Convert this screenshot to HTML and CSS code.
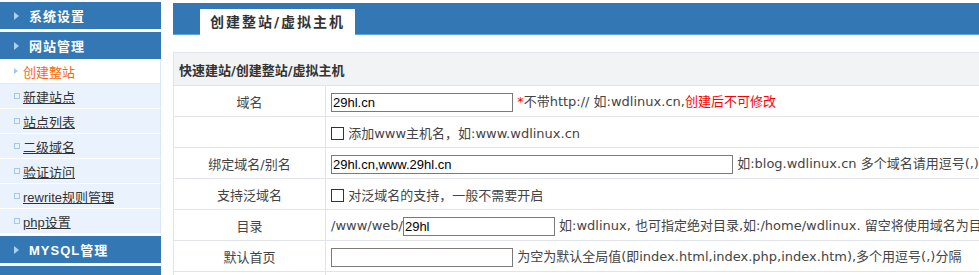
FILE: index.html
```html
<!DOCTYPE html>
<html lang="zh-CN">
<head>
<meta charset="utf-8">
<title>创建整站/虚拟主机</title>
<link rel="stylesheet" href="styles.css">
</head>
<body>
<div class="page">
  <aside class="side">
    <div class="head">系统设置</div>
    <div class="head open">网站管理</div>
    <ul class="items">
      <li class="active"><a href="#">创建整站</a></li>
      <li><a href="#">新建站点</a></li>
      <li><a href="#">站点列表</a></li>
      <li><a href="#">二级域名</a></li>
      <li><a href="#">验证访问</a></li>
      <li><a href="#">rewrite规则管理</a></li>
      <li><a href="#">php设置</a></li>
    </ul>
    <div class="head">MYSQL管理</div>
    <div class="head empty"></div>
  </aside>
  <main class="main">
    <div class="tabbar"><div class="tab">创建整站/虚拟主机</div></div>
    <table class="form">
      <colgroup><col class="c1"><col></colgroup>
      <tr><th class="title" colspan="2">快速建站/创建整站/虚拟主机</th></tr>
      <tr>
        <td class="label">域名</td>
        <td class="val"><input class="txt w182" type="text" value="29hl.cn"> <span class="red">*</span>不带http:// 如:wdlinux.cn,<span class="red">创建后不可修改</span></td>
      </tr>
      <tr>
        <td class="label"></td>
        <td class="val"><input class="chk" type="checkbox"> 添加www主机名，如:www.wdlinux.cn</td>
      </tr>
      <tr>
        <td class="label">绑定域名/别名</td>
        <td class="val"><input class="txt w402" type="text" value="29hl.cn,www.29hl.cn"> 如:blog.wdlinux.cn 多个域名请用逗号(,)分隔</td>
      </tr>
      <tr>
        <td class="label">支持泛域名</td>
        <td class="val"><input class="chk" type="checkbox"> 对泛域名的支持，一般不需要开启</td>
      </tr>
      <tr>
        <td class="label">目录</td>
        <td class="val">/www/web/<input class="txt w152" type="text" value="29hl"> 如:wdlinux, 也可指定绝对目录,如:/home/wdlinux. 留空将使用域名为目录</td>
      </tr>
      <tr>
        <td class="label">默认首页</td>
        <td class="val"><input class="txt w182" type="text" value=""> 为空为默认全局值(即index.html,index.php,index.htm),多个用逗号(,)分隔</td>
      </tr>
      <tr>
        <td class="label"></td>
        <td class="val"></td>
      </tr>
    </table>
  </main>
</div>
</body>
</html>
```
FILE: styles.css
```css
html, body {
  margin: 0;
  padding: 0;
  background: #fff;
  overflow: hidden;
}
body {
  font: 13px "DejaVu Sans", "Noto Sans CJK SC", sans-serif;
  color: #444;
}
.page {
  display: flex;
  gap: 12px;
}

/* sidebar */
.side {
  width: 161px;
  flex: none;
  padding-top: 2px;
  font-family: "Liberation Sans", "Noto Sans CJK SC", sans-serif;
}
.head {
  height: 27px;
  background: #3378b4;
  color: #fff;
  font-weight: bold;
  font-size: 13px;
  letter-spacing: 1px;
  display: flex;
  align-items: center;
  padding-left: 14px;
  margin-bottom: 3px;
}
.head::before {
  content: "";
  border-left: 5px solid #a8d0f3;
  border-top: 4px solid transparent;
  border-bottom: 4px solid transparent;
  margin-right: 10px;
}
.head.open { margin-bottom: 0; }
.head.empty::before { display: none; }
.items {
  list-style: none;
  margin: 0 0 2px;
  padding: 0;
}
.items li {
  height: 24px;
  box-sizing: content-box;
  background: #eaf3fd;
  border-bottom: 1px solid #fff;
  border-right: 1px solid #d8e7f6;
  display: flex;
  align-items: center;
  padding-left: 14px;
}
.items li::before {
  content: "";
  width: 4px;
  height: 4px;
  border: 1px solid #a5c8ea;
  margin-right: 3px;
}
.items li.active {
  background: #fff;
  border-bottom-color: #dce9f6;
}
.items li.active::before {
  width: 0;
  height: 0;
  border: none;
  border-left: 4px solid #a5c8ea;
  border-top: 3px solid transparent;
  border-bottom: 3px solid transparent;
  margin-right: 5px;
}
.items a {
  color: #333;
  text-decoration: underline;
  font-size: 13px;
}
.items li.active a {
  color: #f60;
  text-decoration: none;
}

/* main */
.main {
  flex: 1;
  min-width: 0;
  padding-top: 3px;
}
.tabbar {
  height: 31px;
  background: #3378b4;
  border-bottom: 1px solid #5ba7df;
  display: flex;
  align-items: flex-end;
  padding-left: 27px;
}
.tab {
  width: 155px;
  box-sizing: border-box;
  height: 26px;
  margin-bottom: -1px;
  background: #fff;
  padding-left: 10px;
  font-weight: bold;
  font-size: 14px;
  letter-spacing: 2px;
  color: #333;
  line-height: 26px;
  white-space: nowrap;
}
.form {
  margin-top: 17px;
  border-collapse: collapse;
  table-layout: fixed;
  width: 1000px;
}
.form .c1 { width: 152px; }
.form th, .form td {
  border: 1px solid #e1e4ea;
  padding: 0;
  white-space: nowrap;
  overflow: hidden;
}
.form th.title {
  background: #f2f3f5;
  height: 32px;
  text-align: left;
  padding-left: 5px;
  font-weight: bold;
  color: #333;
}
.form td { height: 30px; }
.form td.label { text-align: center; }
.form td.val { padding-left: 5px; }
.red { color: #f00; }
.txt {
  height: 19px;
  box-sizing: border-box;
  border: 1px solid #7a7a7a;
  padding: 0 1px;
  margin: 0;
  font: 13px "Liberation Sans", sans-serif;
  color: #000;
  vertical-align: middle;
  outline: none;
}
.w182 { width: 182px; }
.w402 { width: 402px; }
.w152 { width: 152px; }
.chk {
  appearance: none;
  -webkit-appearance: none;
  width: 13px;
  height: 13px;
  box-sizing: border-box;
  border: 1px solid #333;
  background: #fff;
  margin: 0;
  vertical-align: -2px;
}
```
